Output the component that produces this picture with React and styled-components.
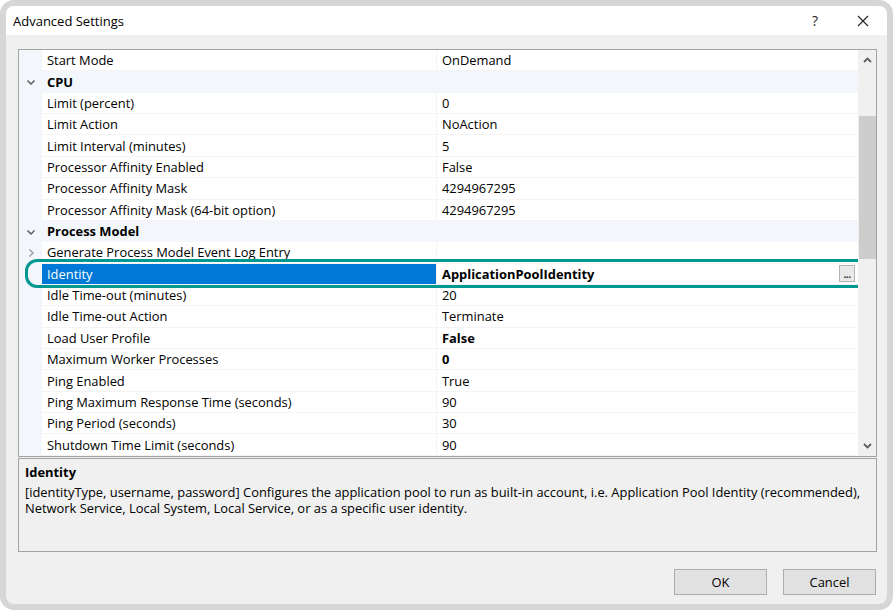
import React from "react";
import styled, { createGlobalStyle } from "styled-components";

const GlobalStyle = createGlobalStyle`
	body {
		margin: 0;
		background: #ffffff;
		font-family: "Open Sans", "Noto Sans", sans-serif;
	}
`;

const ROW_H = 21.37;

const rows = [
	{ name: "Start Mode", value: "OnDemand" },
	{ category: "CPU" },
	{ name: "Limit (percent)", value: "0" },
	{ name: "Limit Action", value: "NoAction" },
	{ name: "Limit Interval (minutes)", value: "5" },
	{ name: "Processor Affinity Enabled", value: "False" },
	{ name: "Processor Affinity Mask", value: "4294967295" },
	{ name: "Processor Affinity Mask (64-bit option)", value: "4294967295" },
	{ category: "Process Model" },
	{ name: "Generate Process Model Event Log Entry", value: "", expandable: true },
	{ name: "Identity", value: "ApplicationPoolIdentity", selected: true, bold: true, ellipsis: true },
	{ name: "Idle Time-out (minutes)", value: "20" },
	{ name: "Idle Time-out Action", value: "Terminate" },
	{ name: "Load User Profile", value: "False", bold: true },
	{ name: "Maximum Worker Processes", value: "0", bold: true },
	{ name: "Ping Enabled", value: "True" },
	{ name: "Ping Maximum Response Time (seconds)", value: "90" },
	{ name: "Ping Period (seconds)", value: "30" },
	{ name: "Shutdown Time Limit (seconds)", value: "90" },
];

const Window = styled.div`
	width: 893px;
	height: 610px;
	box-sizing: border-box;
	border: 6px solid #d6d6d6;
	border-radius: 14px;
	background: #f0f0f0;
	display: flex;
	flex-direction: column;
	overflow: hidden;
`;

const TitleBar = styled.div`
	height: 29px;
	flex: none;
	background: #ffffff;
	display: flex;
	align-items: center;
	padding-left: 7px;
`;

const Title = styled.div`
	flex: 1;
	font-size: 13px;
	color: #000;
`;

const TitleButton = styled.div`
	width: 48px;
	height: 29px;
	display: flex;
	align-items: center;
	justify-content: center;
	font-size: 14px;
	color: #222;
`;

const Content = styled.div`
	flex: 1;
	display: flex;
	flex-direction: column;
	padding: 14px 10px 9px 12px;
`;

const Grid = styled.div`
	position: relative;
	height: 408px;
	box-sizing: border-box;
	border: 1px solid #a3a3a3;
	background: #ffffff;
	display: flex;
`;

const RowList = styled.div`
	flex: 1;
	display: flex;
	flex-direction: column;
	overflow: hidden;
`;

const Row = styled.div`
	position: relative;
	flex: none;
	height: ${ROW_H}px;
	display: grid;
	grid-template-columns: 23px 395px 1fr;
	font-size: 12.9px;
	color: #000;
	background: ${(p) => (p.$category ? "#f3f6fb" : "#ffffff")};
`;

const Gutter = styled.div`
	background: #f3f6fb;
	display: flex;
	align-items: center;
	justify-content: center;
	color: ${(p) => (p.$muted ? "#9a9a9a" : "#555")};
`;

const NameCell = styled.div`
	display: flex;
	align-items: center;
	padding-left: 5px;
	white-space: nowrap;
	overflow: hidden;
	border-bottom: 1px solid ${(p) => (p.$category ? "transparent" : "#f4f4f4")};
	border-right: 1px solid ${(p) => (p.$category ? "transparent" : "#f4f4f4")};
	box-sizing: border-box;
	font-weight: ${(p) => (p.$category ? 700 : 400)};
	background: ${(p) => (p.$selected ? "#0078d7" : "transparent")};
	color: ${(p) => (p.$selected ? "#ffffff" : "#000")};
`;

const ValueCell = styled.div`
	display: flex;
	align-items: center;
	padding-left: 5px;
	padding-right: 3px;
	white-space: nowrap;
	border-bottom: 1px solid ${(p) => (p.$category ? "transparent" : "#f4f4f4")};
	box-sizing: border-box;
	font-weight: ${(p) => (p.$bold ? 700 : 400)};
`;

const ValueText = styled.span`
	flex: 1;
`;

const EllipsisButton = styled.div`
	width: 16px;
	height: 17px;
	box-sizing: border-box;
	border: 1px solid #b4b4b4;
	background: #e9e9e9;
	font-size: 10px;
	font-weight: 700;
	line-height: 17px;
	text-align: center;
	color: #333;
	letter-spacing: -0.5px;
`;

const Ring = styled.div`
	position: absolute;
	top: -5px;
	bottom: -3px;
	left: 6px;
	right: -13px;
	border: 3px solid #009890;
	border-radius: 12px;
	pointer-events: none;
	z-index: 2;
`;

const Scrollbar = styled.div`
	width: 18px;
	flex: none;
	background: #f0f0f0;
	display: flex;
	flex-direction: column;
	align-items: center;
`;

const ScrollArrow = styled.div`
	height: 20px;
	display: flex;
	align-items: center;
	justify-content: center;
	color: #606060;
`;

const Track = styled.div`
	flex: 1;
	width: 100%;
	padding-top: 46px;
	box-sizing: border-box;
`;

const Thumb = styled.div`
	width: 17px;
	margin-left: 0.5px;
	height: 143px;
	background: #cdcdcd;
`;

const Description = styled.div`
	margin-top: 1px;
	height: 94px;
	box-sizing: border-box;
	border: 1px solid #a3a3a3;
	background: #f0f0f0;
	padding: 3px 6px;
	font-size: 12.9px;
	color: #000;
`;

const DescTitle = styled.div`
	font-weight: 700;
	line-height: 20px;
	margin-bottom: 2px;
`;

const DescText = styled.div`
	line-height: 16px;
`;

const Footer = styled.div`
	margin-top: auto;
	display: flex;
	justify-content: flex-end;
	gap: 16px;
	padding-right: 1px;
`;

const Button = styled.div`
	width: 93px;
	height: 26px;
	box-sizing: border-box;
	border: 1px solid #adadad;
	background: #e1e1e1;
	font-size: 12.9px;
	display: flex;
	align-items: center;
	justify-content: center;
	color: #000;
`;

const Chevron = ({ dir }) => (
	<svg width="10" height="10" viewBox="0 0 10 10" fill="none">
		<path
			d={dir === "down" ? "M1.5 3.5 L5 7 L8.5 3.5" : "M3.5 1.5 L7 5 L3.5 8.5"}
			stroke="currentColor"
			strokeWidth="1.4"
		/>
	</svg>
);

const ArrowGlyph = ({ up }) => (
	<svg width="9" height="6" viewBox="0 0 9 6" fill="none">
		<path
			d={up ? "M1 5 L4.5 1.5 L8 5" : "M1 1 L4.5 4.5 L8 1"}
			stroke="currentColor"
			strokeWidth="1.8"
		/>
	</svg>
);

const CloseIcon = () => (
	<svg width="12" height="12" viewBox="0 0 12 12">
		<path d="M1 1 L11 11 M11 1 L1 11" stroke="#222" strokeWidth="1.1" />
	</svg>
);

const PropertyRow = ({ row }) => {
	if (row.category) {
		return (
			<Row $category>
				<Gutter>
					<Chevron dir="down" />
				</Gutter>
				<NameCell $category>{row.category}</NameCell>
				<ValueCell $category />
			</Row>
		);
	}
	return (
		<Row>
			<Gutter $muted>{row.expandable && <Chevron dir="right" />}</Gutter>
			<NameCell $selected={row.selected}>{row.name}</NameCell>
			<ValueCell $bold={row.bold}>
				<ValueText>{row.value}</ValueText>
				{row.ellipsis && <EllipsisButton>...</EllipsisButton>}
			</ValueCell>
			{row.selected && <Ring />}
		</Row>
	);
};

export default function App() {
	return (
		<>
			<GlobalStyle />
			<Window>
				<TitleBar>
					<Title>Advanced Settings</Title>
					<TitleButton>?</TitleButton>
					<TitleButton>
						<CloseIcon />
					</TitleButton>
				</TitleBar>
				<Content>
					<Grid>
						<RowList>
							{rows.map((row, i) => (
								<PropertyRow key={i} row={row} />
							))}
						</RowList>
						<Scrollbar>
							<ScrollArrow>
								<ArrowGlyph up />
							</ScrollArrow>
							<Track>
								<Thumb />
							</Track>
							<ScrollArrow>
								<ArrowGlyph />
							</ScrollArrow>
						</Scrollbar>
					</Grid>
					<Description>
						<DescTitle>Identity</DescTitle>
						<DescText>
							[identityType, username, password] Configures the application pool to run as
							built-in account, i.e. Application Pool Identity (recommended), Network Service,
							Local System, Local Service, or as a specific user identity.
						</DescText>
					</Description>
					<Footer>
						<Button>OK</Button>
						<Button>Cancel</Button>
					</Footer>
				</Content>
			</Window>
		</>
	);
}
